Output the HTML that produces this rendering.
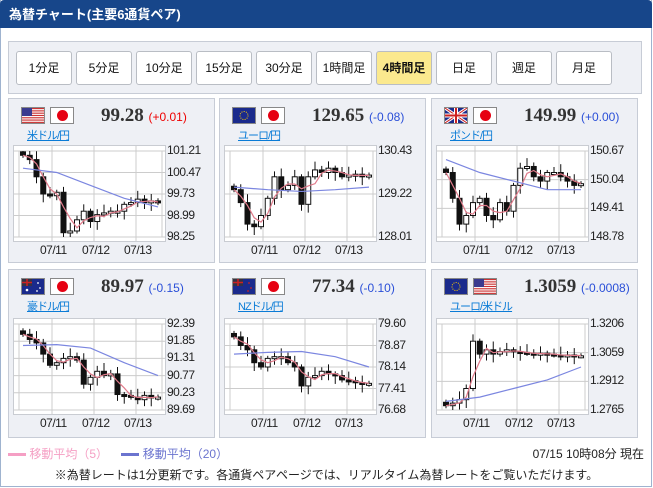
<!DOCTYPE html>
<html><head><meta charset="utf-8"><style>
*{margin:0;padding:0;box-sizing:border-box}
body{width:653px;height:488px;background:#fff;font-family:"Liberation Sans","Noto Sans CJK JP",sans-serif;position:relative;overflow:hidden}
#wrap{position:absolute;left:0;top:0;width:652px;height:487px;border:1px solid #9fb3cf;border-top:none}
#hd{position:absolute;left:0;top:0;width:652px;height:28px;background:#17468a;border-radius:4px 4px 0 0;color:#fff;font-weight:bold;font-size:13px;line-height:30px;padding-left:9px}
#bar{position:absolute;left:8px;top:41px;width:634px;height:53px;background:#eef0f5;border:1px solid #c7ccd6}
.b{position:absolute;top:9px;width:56px;height:34px;background:#fff;border:1px solid #b9bdc4;border-radius:3px;font-size:12px;text-align:center;line-height:32px;color:#111}
.b.on{background:#fbe98e;font-weight:bold}
.p{position:absolute;width:207px;background:#eef0f5;border:1px solid #c7ccd6}
.fl{position:absolute;top:8px;width:24px;height:17px;border:1px solid #888;background:#fff}
.jp::after{content:"";position:absolute;left:6px;top:2px;width:11px;height:11px;border-radius:50%;background:#e60012}
.pr{position:absolute;top:6px;left:92px;font-family:"Liberation Serif",serif;font-weight:bold;font-size:19px;color:#333;white-space:nowrap}
.pr span{font-family:"Liberation Sans",sans-serif;font-weight:normal;font-size:12px;color:#2a4fd8}
.pr span.r{color:#e00}
.lk{position:absolute;top:28px;left:18px;font-size:11px;color:#0a7bd6;text-decoration:underline;letter-spacing:-1px}
.ch{position:absolute;left:4px;width:153px;background:#fff;border:1px solid #c9ccd2}
.yl{position:absolute;left:158px;font-size:12px;color:#222;letter-spacing:-0.5px}
.xl{position:absolute;font-size:12px;color:#222;letter-spacing:-0.5px}
#lg{position:absolute;top:445px;left:8px;font-size:12px}
#ft{position:absolute;top:466px;left:0;width:653px;text-align:center;font-size:12px;color:#222}
</style></head><body>
<div id="wrap"></div>
<div id="hd">為替チャート(主要6通貨ペア)</div>
<div id="bar">
<div class="b" style="left:7px">1分足</div><div class="b" style="left:67px">5分足</div><div class="b" style="left:127px">10分足</div><div class="b" style="left:187px">15分足</div><div class="b" style="left:247px">30分足</div><div class="b" style="left:307px">1時間足</div><div class="b on" style="left:367px">4時間足</div><div class="b" style="left:427px">日足</div><div class="b" style="left:487px">週足</div><div class="b" style="left:547px">月足</div>
</div>
<div id="panels"></div>
<div id="lg"><span style="display:inline-block;width:18px;height:3px;background:#f59fc4;vertical-align:middle"></span> <span style="color:#f59fc4">移動平均（5）</span>&nbsp;&nbsp;&nbsp;&nbsp;<span style="display:inline-block;width:18px;height:3px;background:#6b74cf;vertical-align:middle"></span> <span style="color:#6b74cf">移動平均（20）</span></div>
<div style="position:absolute;top:445px;right:9px;font-size:12px;color:#222">07/15 10時08分 現在</div>
<div id="ft">※為替レートは1分更新です。各通貨ペアページでは、リアルタイム為替レートをご覧いただけます。</div>
<script>
const flags={
us:'<svg width="22" height="15"><rect width="22" height="15" fill="#fff"/>'+[0,2,4,6,8,10,12].map(y=>`<rect y="${y*1.15}" width="22" height="1.15" fill="#c33"/>`).join('')+'<rect width="10" height="8" fill="#3b3b8f"/></svg>',
eu:'<svg width="22" height="15"><rect width="22" height="15" fill="#1a2a8c"/><circle cx="11" cy="7.5" r="4" fill="none" stroke="#fc0" stroke-dasharray="1 1.3"/></svg>',
gb:'<svg width="22" height="15"><rect width="22" height="15" fill="#1a2a8c"/><path d="M0 0L22 15M22 0L0 15" stroke="#fff" stroke-width="3"/><path d="M0 0L22 15M22 0L0 15" stroke="#c22" stroke-width="1"/><path d="M11 0V15M0 7.5H22" stroke="#fff" stroke-width="4"/><path d="M11 0V15M0 7.5H22" stroke="#c22" stroke-width="2"/></svg>',
au:'<svg width="22" height="15"><rect width="22" height="15" fill="#1a2a8c"/><rect width="10" height="7" fill="#334"/><path d="M0 3.5H10M5 0V7" stroke="#c22" stroke-width="1.5"/><circle cx="5" cy="11" r="1.3" fill="#fff"/><circle cx="16" cy="4" r=".9" fill="#fff"/><circle cx="18" cy="9" r=".9" fill="#fff"/><circle cx="15" cy="12" r=".9" fill="#fff"/></svg>',
nz:'<svg width="22" height="15"><rect width="22" height="15" fill="#1a2a8c"/><rect width="10" height="7" fill="#334"/><path d="M0 3.5H10M5 0V7" stroke="#c22" stroke-width="1.5"/><circle cx="16" cy="4" r=".9" fill="#c22"/><circle cx="18" cy="9" r=".9" fill="#c22"/><circle cx="15" cy="12" r=".9" fill="#c22"/></svg>'};
const P=[
{x:8,y:98,h:165,f:['us','jp'],pr:'99.28',ch:'(+0.01)',red:1,lk:'米ドル/円',yl:['101.21','100.47','99.73','98.99','98.25'],
c:[.05,.1,.3,.5,.52,.48,.95,.93,.8,.7,.82,.74,.72,.7,.7,.62,.6,.56,.6,.58,.6],b:[.2,.25,.4,.55,.65]},
{x:219,y:98,h:165,f:['eu','jp'],pr:'129.65',ch:'(-0.08)',lk:'ユーロ/円',yl:['130.43','129.22','128.01'],
c:[.45,.6,.85,.88,.75,.55,.3,.45,.4,.3,.62,.3,.22,.25,.2,.25,.3,.28,.27,.3,.28],b:[.42,.45,.47,.45,.42]},
{x:431,y:98,h:165,f:['gb','jp'],pr:'149.99',ch:'(+0.00)',lk:'ポンド/円',yl:['150.67','150.04','149.41','148.78'],
c:[.25,.55,.85,.75,.6,.55,.75,.8,.6,.7,.4,.2,.18,.3,.35,.25,.25,.3,.35,.4,.38],b:[.1,.25,.35,.45,.45]},
{x:8,y:269,h:169,f:['au','jp'],pr:'89.97',ch:'(-0.15)',lk:'豪ドル/円',yl:['92.39','91.85','91.31','90.77','90.23','89.69'],
c:[.12,.18,.22,.35,.48,.45,.4,.38,.42,.7,.62,.55,.6,.58,.82,.83,.85,.88,.83,.86,.85],b:[.25,.24,.28,.45,.6]},
{x:219,y:269,h:169,f:['nz','jp'],pr:'77.34',ch:'(-0.10)',lk:'NZドル/円',yl:['79.60','78.87','78.14','77.41','76.68'],
c:[.15,.25,.3,.45,.5,.4,.38,.38,.45,.5,.72,.62,.6,.55,.58,.6,.65,.66,.68,.7,.69],b:[.35,.33,.32,.38,.5]},
{x:431,y:269,h:169,f:['eu','us'],pr:'1.3059',ch:'(-0.0008)',lk:'ユーロ/米ドル',yl:['1.3206','1.3059','1.2912','1.2765'],
c:[.95,.92,.88,.75,.2,.35,.3,.35,.32,.3,.32,.33,.34,.35,.34,.35,.36,.37,.36,.37,.37],b:[.9,.85,.75,.65,.5]}];
let html='';
P.forEach((p,i)=>{
 const row2=p.y>200, cy=row2?48:46, chH=97;
 const pw=143,ph=86,ox=5,oy=5;
 let s=`<svg width="151" height="${chH-2}" style="position:absolute;left:0;top:0">`;
 [42,84,126].forEach(x=>s+=`<line x1="${x-4}" y1="0" x2="${x-4}" y2="${chH}" stroke="#ccc"/>`);
 const n=p.yl.length;
 p.yl.forEach((v,k)=>{const y=oy+ph*k/(n-1);s+=`<line x1="0" y1="${y}" x2="151" y2="${y}" stroke="#ccc"/>`});
 s+=`<rect x="${ox}" y="${oy}" width="${pw}" height="${ph}" fill="none" stroke="#ccc"/>`;
 const N=p.c.length,dx=(pw-8)/(N-1);
 let prev=p.c[0]-0.04;
 const pts=[];
 p.c.forEach((c,k)=>{
  const X=ox+4+k*dx, o=prev; const top=Math.min(o,c),bot=Math.max(o,c);
  const hi=Math.max(0,top-0.03-((k*37)%5)/60), lo=Math.min(1,bot+0.03+((k*53)%4)/45);
  s+=`<line x1="${X}" y1="${oy+hi*ph}" x2="${X}" y2="${oy+lo*ph}" stroke="#111"/>`;
  const bh=Math.max(2,(bot-top)*ph);
  s+=`<rect x="${X-2.5}" y="${oy+top*ph}" width="5" height="${bh}" fill="${c>o?'#111':'#fff'}" stroke="#111" stroke-width="1"/>`;
  prev=c;
  const a=p.c.slice(Math.max(0,k-2),k+1);pts.push([X,oy+(a.reduce((x,y)=>x+y)/a.length)*ph]);
 });
 s+=`<polyline points="${pts.map(q=>q.join(',')).join(' ')}" fill="none" stroke="#e07a8a" stroke-width="1.2"/>`;
 const bp=p.b.map((v,k)=>[ox+4+k*(pw-8)/4,oy+v*ph]);
 s+=`<polyline points="${bp.map(q=>q.join(',')).join(' ')}" fill="none" stroke="#7b86e0" stroke-width="1.2"/></svg>`;
 let yl='';p.yl.forEach((v,k)=>{yl+=`<div class="yl" style="top:${cy+oy-7+ph*k/(n-1)}px">${v}</div>`});
 html+=`<div class="p" style="left:${p.x}px;top:${p.y}px;height:${p.h}px">
 <div class="fl" style="left:12px">${flags[p.f[0]]}</div>
 <div class="fl ${p.f[1]=='jp'?'jp':''}" style="left:41px">${p.f[1]=='jp'?'':flags[p.f[1]]}</div>
 <div class="pr">${p.pr} <span class="${p.red?'r':''}">${p.ch}</span></div>
 <div class="lk">${p.lk}</div>
 <div class="ch" style="top:${cy}px;height:${chH}px">${s}</div>${yl}
 <div class="xl" style="left:31px;top:${cy+chH+1}px">07/11</div>
 <div class="xl" style="left:73px;top:${cy+chH+1}px">07/12</div>
 <div class="xl" style="left:115px;top:${cy+chH+1}px">07/13</div></div>`;
});
document.getElementById('panels').innerHTML=html;
</script>
</body></html>
